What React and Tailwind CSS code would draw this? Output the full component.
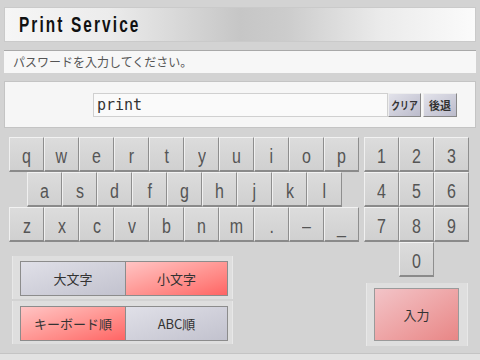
import React from "react";

const Key = ({ label }) => (
  <div className="w-[35px] h-[35px] shrink-0 flex items-center justify-center bg-gradient-to-b from-[#dcdcdc] to-[#d0d0d0] border border-t-[#f2f2f2] border-l-[#f0f0f0] border-r-[#8e8e8e] border-b-[#8a8a8a] border-b-2 text-[#555] text-[20px] font-['Liberation_Sans',sans-serif] leading-none">
    <span className="inline-block [transform:scaleX(0.8)] pt-[3px]">{label}</span>
  </div>
);

const Row = ({ keys, className = "" }) => (
  <div className={"flex " + className}>
    {keys.map((k, i) => (
      <Key key={i} label={k} />
    ))}
  </div>
);

const Toggle = ({ left, right, leftOn }) => (
  <div className="ml-[3px] w-[221px] bg-[#dedede] pt-[5px] pb-[3px] pl-[7px] pr-[4px] border-x border-[#e8e8e8]">
    <div className="flex h-[35px] border border-[#8c8c8c]">
      <div
        className={
          "w-[105px] flex items-center justify-center whitespace-nowrap text-[13px] text-[#333] border-r border-[#8c8c8c] " +
          (leftOn
            ? "bg-gradient-to-br from-[#ffc4c4] to-[#ff6464]"
            : "bg-gradient-to-br from-[#e0e0e8] to-[#c2c2ce]")
        }
      >
        {left}
      </div>
      <div
        className={
          "flex-1 flex items-center justify-center whitespace-nowrap text-[13px] text-[#333] " +
          (!leftOn
            ? "bg-gradient-to-br from-[#ffc4c4] to-[#ff6464]"
            : "bg-gradient-to-br from-[#e0e0e8] to-[#c2c2ce]")
        }
      >
        {right}
      </div>
    </div>
  </div>
);

export default function App() {
  return (
    <div className="w-[480px] h-[360px] bg-[#d3d3d3] flex flex-col overflow-hidden font-['Noto_Sans_CJK_JP',sans-serif]">
      <div className="px-[4px] pt-[7px]">
        <div className="h-[35px] flex items-center pl-[14px] border border-[#cacaca] bg-[linear-gradient(to_right,#f6f6f6_0%,#ececec_22%,#c6c6c6_50%,#cccccc_60%,#ebebeb_80%,#fbfbfb_100%)]">
          <span className="inline-block origin-left [transform:scaleX(0.7)] font-['Liberation_Sans',sans-serif] font-bold text-[22px] tracking-[3px] text-[#111] whitespace-nowrap">
            Print Service
          </span>
        </div>
      </div>

      <div className="mx-[4px] mt-[8px] h-[23px] border-t border-[#a9a9a9] bg-[#f7f7f7] flex items-center pl-[9px] text-[12px] text-[#555]">
        パスワードを入力してください。
      </div>

      <div className="mx-[4px] mt-[8px] h-[47px] bg-[#f6f6f6] border border-[#c4c4c4] flex pt-[11px] pl-[88px]">
        <div className="w-[295px] h-[24px] bg-[#fafafa] border border-[#d0d0d0] flex items-center pl-[3px] font-['DejaVu_Sans_Mono',monospace] text-[15px] text-[#333]">
          print
        </div>
        <div className="w-[33px] h-[24px] flex items-center justify-center whitespace-nowrap bg-gradient-to-br from-[#e2e2ea] to-[#bcbccc] border border-t-[#eeeeee] border-l-[#eeeeee] border-r-[#888] border-b-[#888] text-[11px] font-bold text-[#333]">
          <span className="inline-block [transform:scaleX(0.8)]">クリア</span>
        </div>
        <div className="ml-[2px] w-[34px] h-[24px] flex items-center justify-center whitespace-nowrap bg-gradient-to-br from-[#e2e2ea] to-[#bcbccc] border border-t-[#eeeeee] border-l-[#eeeeee] border-r-[#888] border-b-[#888] text-[11px] font-bold text-[#333]">
          後退
        </div>
      </div>

      <div className="mt-[9px] flex pl-[9px] gap-[4px]">
        <div className="flex flex-col w-[351px]">
          <Row keys={["q", "w", "e", "r", "t", "y", "u", "i", "o", "p"]} />
          <Row keys={["a", "s", "d", "f", "g", "h", "j", "k", "l"]} className="pl-[18px]" />
          <Row keys={["z", "x", "c", "v", "b", "n", "m", ".", "\u2013", "_"]} />
          <div className="mt-[14px] flex flex-col gap-[2px]">
            <Toggle left="大文字" right="小文字" leftOn={false} />
            <Toggle left="キーボード順" right="ABC順" leftOn={true} />
          </div>
        </div>
        <div className="flex flex-col w-[105px]">
          <Row keys={["1", "2", "3"]} />
          <Row keys={["4", "5", "6"]} />
          <Row keys={["7", "8", "9"]} />
          <Row keys={["0"]} className="pl-[35px]" />
          <div className="mt-[6px] ml-[2px] w-[102px] bg-[#dedede] pt-[5px] pb-[5px] pl-[7px] pr-[8px] border-x border-[#e8e8e8]">
            <div className="h-[53px] flex items-center justify-center border border-[#9a9a9a] bg-gradient-to-br from-[#f2c4c8] to-[#e88686] text-[13px] text-[#333]">
              入力
            </div>
          </div>
        </div>
      </div>

      <div className="mt-auto h-[7px] border-t border-[#c4c4c4] bg-[#e2e2e2]" />
    </div>
  );
}
